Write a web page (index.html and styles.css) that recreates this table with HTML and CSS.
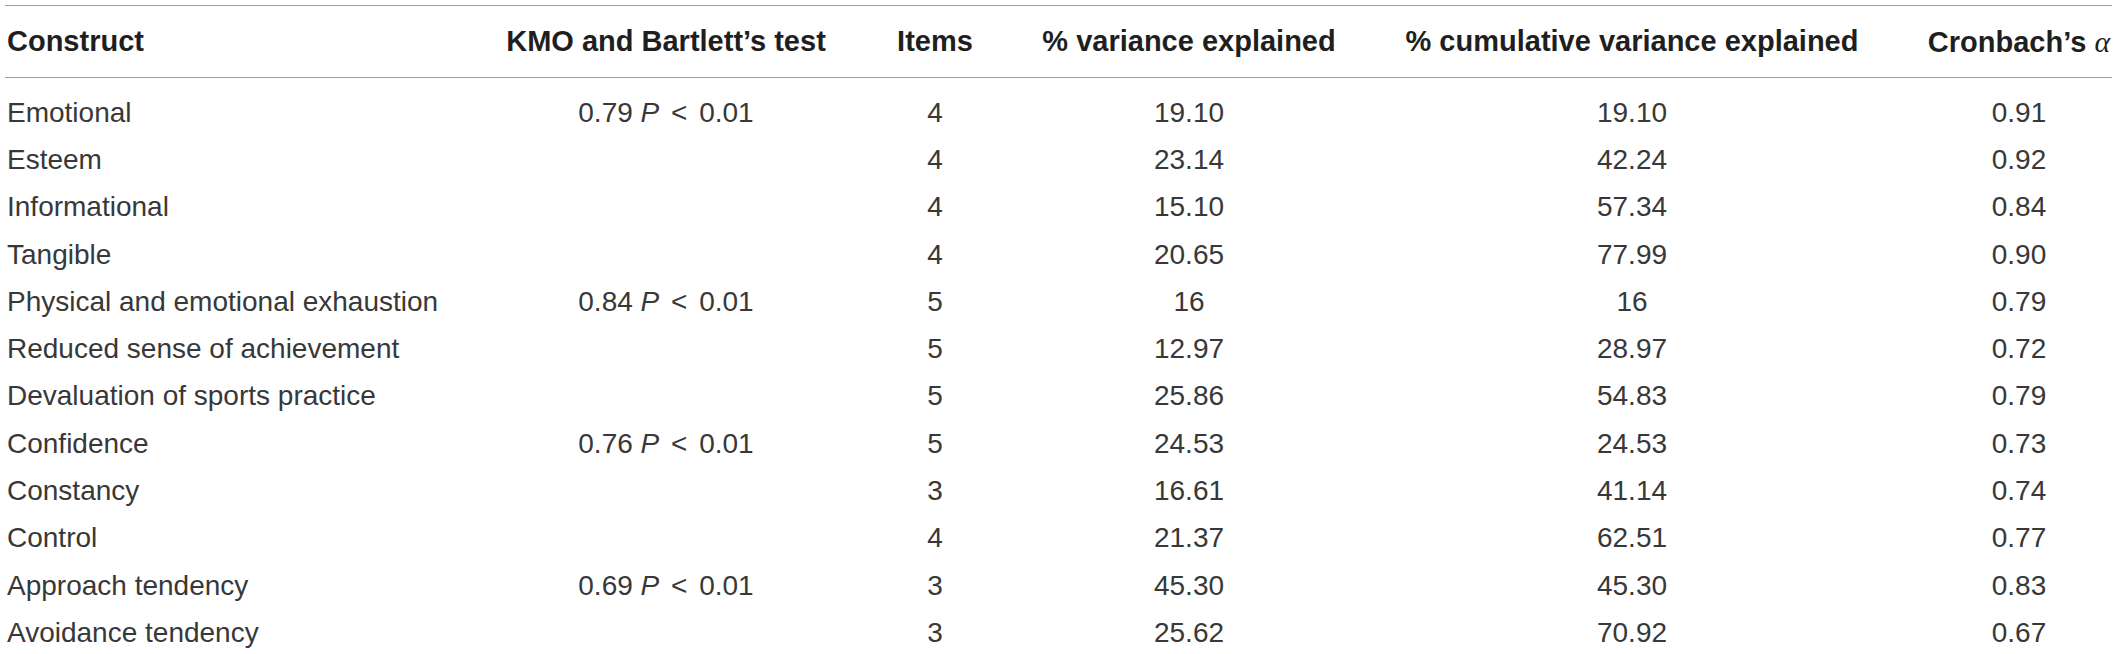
FILE: index.html
```html
<!DOCTYPE html>
<html>
<head>
<meta charset="utf-8">
<link rel="stylesheet" href="styles.css">
</head>
<body>
<table class="tbl">
  <colgroup>
    <col class="c1"><col class="c2"><col class="c3"><col class="c4"><col class="c5"><col class="c6">
  </colgroup>
  <thead>
    <tr>
      <th class="left">Construct</th>
      <th>KMO and Bartlett’s test</th>
      <th>Items</th>
      <th>% variance explained</th>
      <th>% cumulative variance explained</th>
      <th class="last">Cronbach’s <span class="alpha">α</span></th>
    </tr>
  </thead>
  <tbody>
    <tr class="first"><td class="left">Emotional</td><td>0.79 <i>P</i> <span class="lt">&lt;</span> 0.01</td><td>4</td><td>19.10</td><td>19.10</td><td class="last">0.91</td></tr>
    <tr><td class="left">Esteem</td><td></td><td>4</td><td>23.14</td><td>42.24</td><td class="last">0.92</td></tr>
    <tr><td class="left">Informational</td><td></td><td>4</td><td>15.10</td><td>57.34</td><td class="last">0.84</td></tr>
    <tr><td class="left">Tangible</td><td></td><td>4</td><td>20.65</td><td>77.99</td><td class="last">0.90</td></tr>
    <tr><td class="left">Physical and emotional exhaustion</td><td>0.84 <i>P</i> <span class="lt">&lt;</span> 0.01</td><td>5</td><td>16</td><td>16</td><td class="last">0.79</td></tr>
    <tr><td class="left">Reduced sense of achievement</td><td></td><td>5</td><td>12.97</td><td>28.97</td><td class="last">0.72</td></tr>
    <tr><td class="left">Devaluation of sports practice</td><td></td><td>5</td><td>25.86</td><td>54.83</td><td class="last">0.79</td></tr>
    <tr><td class="left">Confidence</td><td>0.76 <i>P</i> <span class="lt">&lt;</span> 0.01</td><td>5</td><td>24.53</td><td>24.53</td><td class="last">0.73</td></tr>
    <tr><td class="left">Constancy</td><td></td><td>3</td><td>16.61</td><td>41.14</td><td class="last">0.74</td></tr>
    <tr><td class="left">Control</td><td></td><td>4</td><td>21.37</td><td>62.51</td><td class="last">0.77</td></tr>
    <tr><td class="left">Approach tendency</td><td>0.69 <i>P</i> <span class="lt">&lt;</span> 0.01</td><td>3</td><td>45.30</td><td>45.30</td><td class="last">0.83</td></tr>
    <tr><td class="left">Avoidance tendency</td><td></td><td>3</td><td>25.62</td><td>70.92</td><td class="last">0.67</td></tr>
  </tbody>
</table>
</body>
</html>
```
FILE: styles.css
```css
html, body {
  margin: 0;
  padding: 0;
  background: #ffffff;
}
body {
  padding: 5px 0 0 5px;
  font-family: "Liberation Sans", Arial, sans-serif;
  color: #383838;
}
.tbl {
  table-layout: fixed;
  border-collapse: collapse;
  width: 2107px;
}
.c1 { width: 475px; }
.c2 { width: 372px; }
.c3 { width: 166px; }
.c4 { width: 342px; }
.c5 { width: 544px; }
.c6 { width: 208px; }
.tbl th {
  font-weight: bold;
  font-size: 29px;
  color: #1f1f1f;
  height: 71px;
  padding: 0;
  text-align: center;
  white-space: nowrap;
  border-top: 1px solid #9d9d9d;
  border-bottom: 1px solid #9d9d9d;
  vertical-align: middle;
}
.tbl td {
  font-size: 28px;
  height: 47.3px;
  padding: 0;
  text-align: center;
  white-space: nowrap;
  vertical-align: middle;
}
.tbl tr.first td {
  padding-top: 11px;
}
.tbl .left {
  text-align: left;
  padding-left: 2px;
}
.tbl .last {
  padding-left: 22px;
}
.lt {
  margin: 0 4px;
}
.alpha {
  font-family: "Liberation Serif", serif;
  font-style: italic;
  font-weight: normal;
  font-size: 30px;
}
```
